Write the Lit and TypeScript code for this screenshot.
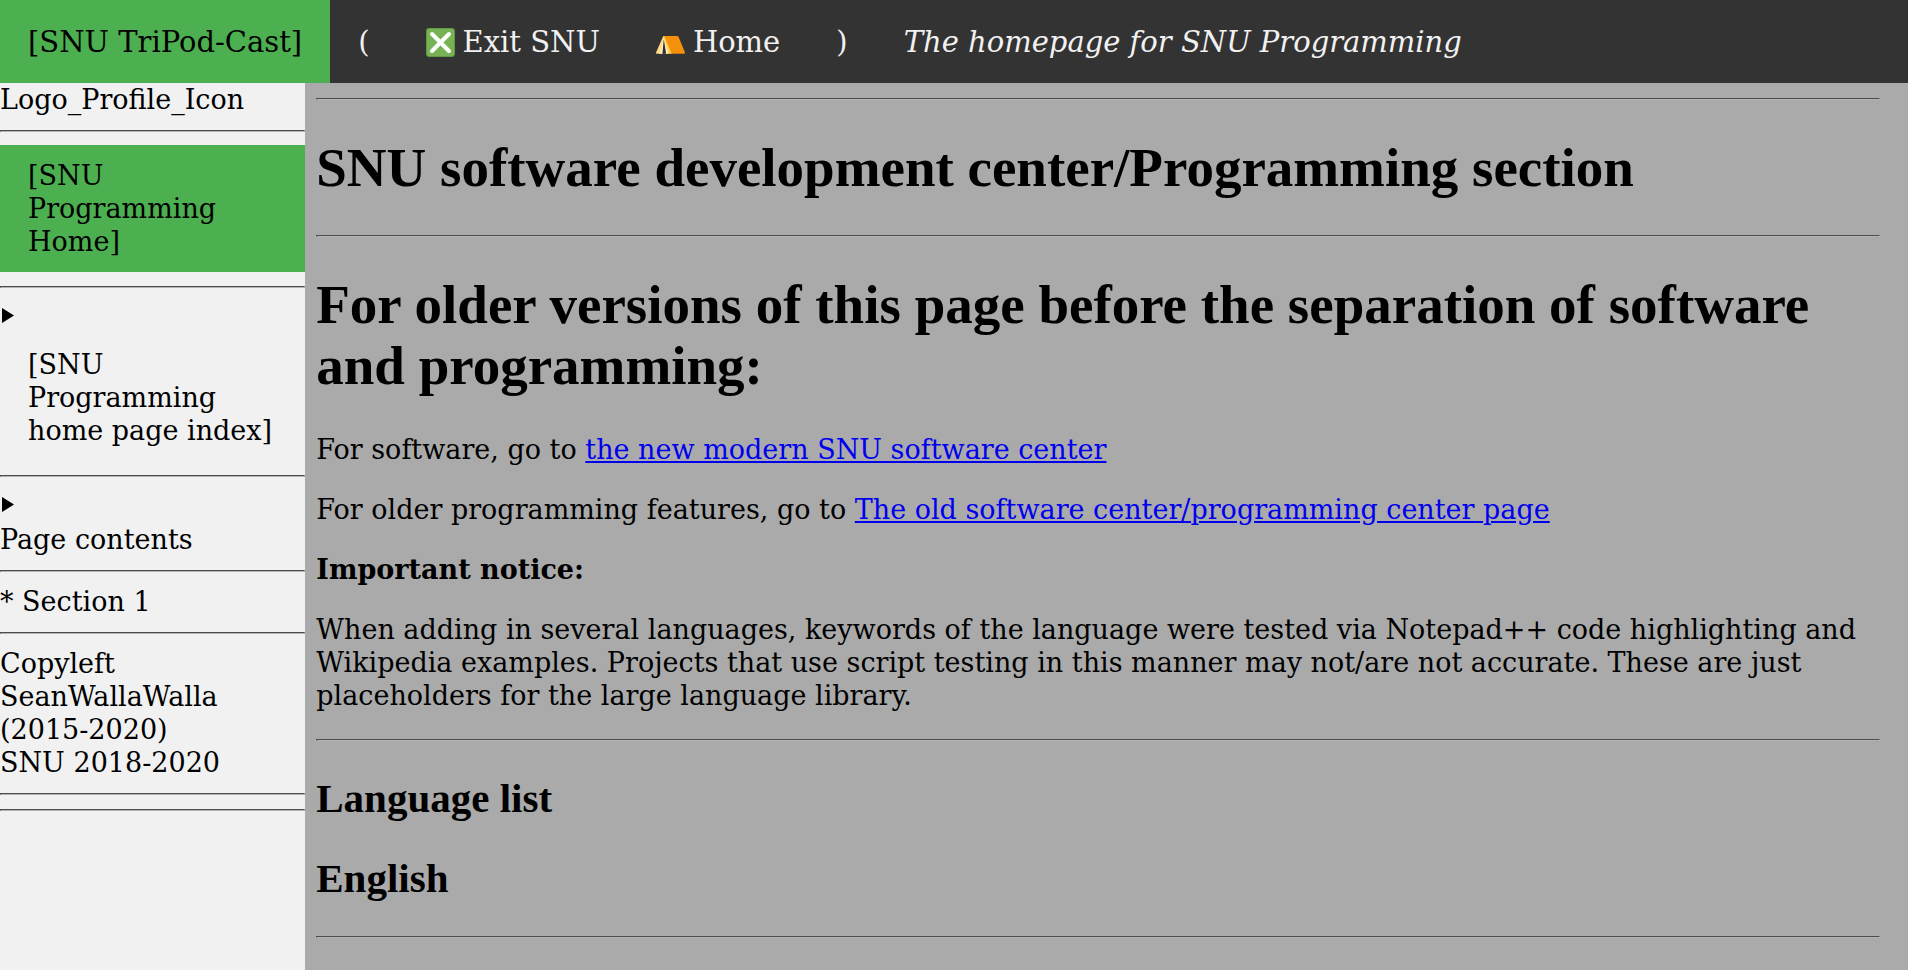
import { LitElement, html, css, svg } from "lit";
import { customElement } from "lit/decorators.js";

const crossIcon = html`<svg class="icon" viewBox="0 0 36 36" aria-hidden="true">
  ${svg`
    <rect width="36" height="36" rx="4" fill="#5c913b" />
    <rect x="1" y="1" width="34" height="34" rx="3" fill="#77b255" />
    <path d="M7.5 7.5 L28.5 28.5 M28.5 7.5 L7.5 28.5" stroke="#fff" stroke-width="5" stroke-linecap="round" />
  `}
</svg>`;

const tentIcon = html`<svg class="icon" viewBox="0 0 36 36" aria-hidden="true">
  ${svg`
    <path d="M9 10 H26 Q27.5 10 28.2 11.5 L36 30.5 Q36 32 35 32 H17 Z" fill="#f4900c" />
    <path d="M9 10 Q10.5 10 11.3 12 L19.5 32 H10 Z" fill="#ffcc4d" />
    <path d="M9 10 L0 30.5 Q0 32 1 32 H9 L10 12 Z" fill="#ffd983" />
    <path d="M9.5 12 L4 32 H9 Z" fill="#ffe8b6" />
    <path d="M9.5 12 L16 32 H11 Z" fill="#ffe8b6" />
    <path d="M9.7 14 L8 32 H12.5 Z" fill="#292f33" />
  `}
</svg>`;

@customElement("app-root")
export class AppRoot extends LitElement {
  static styles = css`
    :host {
      display: flex;
      flex-direction: column;
      min-height: 100vh;
      font: 27px/33px "DejaVu Serif", serif;
      color: #000;
      background: #aaa;
    }
    .topbar {
      background: #333;
      font-size: 29px;
    }
    .menu {
      display: flex;
      list-style: none;
      margin: 0;
      padding: 0;
    }
    .menu-link {
      display: flex;
      align-items: center;
      gap: 8px;
      padding: 26px 28px 24px;
      color: #f1f1f1;
      text-decoration: none;
      white-space: nowrap;
    }
    .icon {
      width: 29px;
      height: 29px;
    }
    .active {
      background: #4caf50;
      color: #000;
    }
    .layout {
      flex: 1;
      display: grid;
      grid-template-columns: 16% minmax(0, 1fr);
    }
    .sidebar {
      background: #f1f1f1;
    }
    .side-link {
      display: block;
      padding: 14px 28px;
      color: #000;
      text-decoration: none;
    }
    .toggle {
      display: flow-root;
      cursor: pointer;
    }
    .toggle::before {
      content: "";
      display: block;
      width: 12px;
      height: 15px;
      margin: 7px 2px 11px;
      background: #000;
      clip-path: polygon(0 0, 100% 50%, 0 100%);
    }
    .rule {
      margin: 14px 0 13px;
      border: 1px solid;
      border-color: #4d4d4d #b3b3b3 #b3b3b3 #4d4d4d;
    }
    .text {
      margin: 0;
    }
    .content {
      padding: 1px 28px 0 11px;
    }
    .content p {
      margin: 27px 0;
    }
    .title,
    .subtitle {
      font-family: "Liberation Serif", serif;
      font-weight: bold;
    }
    .title {
      font-size: 55px;
      line-height: 61px;
      margin: 37px 0;
    }
    .subtitle {
      font-size: 41px;
      line-height: 45px;
      margin: 35px 0;
    }
    .link {
      color: #00e;
    }
  `;

  render() {
    return html`
      <header class="topbar">
        <ul class="menu">
          <li><a class="menu-link active" href="#top">[SNU TriPod-Cast]</a></li>
          <li><a class="menu-link" href="#open">(</a></li>
          <li><a class="menu-link" href="#exit">${crossIcon}<span>Exit SNU</span></a></li>
          <li><a class="menu-link" href="#home">${tentIcon}<span>Home</span></a></li>
          <li><a class="menu-link" href="#close">)</a></li>
          <li><a class="menu-link" href="#about"><i>The homepage for SNU Programming</i></a></li>
        </ul>
      </header>
      <div class="layout">
        <nav class="sidebar">
          <p class="text">Logo_Profile_Icon</p>
          <hr class="rule" />
          <a class="side-link active" href="#programming">[SNU Programming Home]</a>
          <hr class="rule" />
          <details>
            <summary class="toggle"><a class="side-link" href="#index">[SNU Programming home page index]</a></summary>
          </details>
          <hr class="rule" />
          <details>
            <summary class="toggle"><p class="text">Page contents</p></summary>
          </details>
          <hr class="rule" />
          <p class="text">* Section 1</p>
          <hr class="rule" />
          <p class="text">Copyleft SeanWallaWalla (2015-2020)<br />SNU 2018-2020</p>
          <hr class="rule" />
          <hr class="rule" />
        </nav>
        <main class="content">
          <hr class="rule" />
          <h1 class="title">SNU software development center/Programming section</h1>
          <hr class="rule" />
          <h1 class="title">For older versions of this page before the separation of software and programming:</h1>
          <p>For software, go to <a class="link" href="#software">the new modern SNU software center</a></p>
          <p>For older programming features, go to <a class="link" href="#old">The old software center/programming center page</a></p>
          <p><b>Important notice:</b></p>
          <p>
            When adding in several languages, keywords of the language were tested via Notepad++ code highlighting and
            Wikipedia examples. Projects that use script testing in this manner may not/are not accurate. These are just
            placeholders for the large language library.
          </p>
          <hr class="rule" />
          <h2 class="subtitle">Language list</h2>
          <h2 class="subtitle">English</h2>
          <hr class="rule" />
        </main>
      </div>
    `;
  }
}
